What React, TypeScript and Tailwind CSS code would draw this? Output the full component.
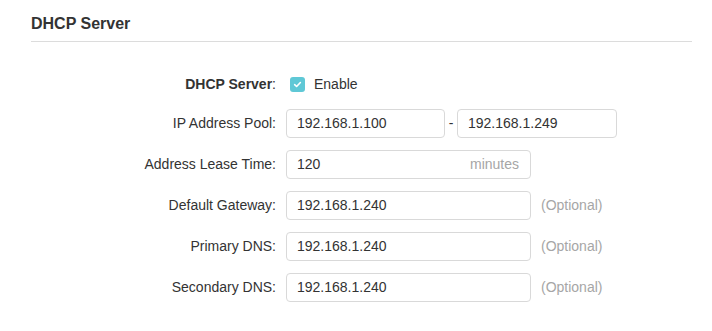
const font = { fontFamily: '"Liberation Sans", Arial, sans-serif' };

interface FieldRow {
  label: string;
  value: string;
  suffix?: string;
}

const SINGLE_ROWS: FieldRow[] = [
  { label: 'Default Gateway:', value: '192.168.1.240', suffix: '(Optional)' },
  { label: 'Primary DNS:', value: '192.168.1.240', suffix: '(Optional)' },
  { label: 'Secondary DNS:', value: '192.168.1.240', suffix: '(Optional)' },
];

function Label({ children, bold }: { children: React.ReactNode; bold?: boolean }) {
  return (
    <div className={`w-[245px] shrink-0 text-right text-[14px] text-[#333] ${bold ? 'font-bold' : ''}`}>
      {children}
    </div>
  );
}

function TextBox({ value, width, unit }: { value: string; width: string; unit?: string }) {
  return (
    <div
      className={`${width} h-[29px] flex items-center justify-between rounded-[4px] border border-[#d9d9d9] bg-white pl-[10px] pr-[11px] text-[14px] text-[#333]`}
    >
      <span>{value}</span>
      {unit && <span className="text-[#a6a6a6]">{unit}</span>}
    </div>
  );
}

export default function App() {
  return (
    <div className="w-[712px] h-[331px] bg-white pl-[31px] pr-[20px]" style={font}>
      <div className="pt-[14px] pb-[7px] border-b border-[#dcdcdc]">
        <h2 className="text-[16px] leading-[20px] font-bold text-[#333]">DHCP Server</h2>
      </div>

      <div className="pt-[28px] flex flex-col">
        <div className="flex items-center h-[28px] mb-[11px]">
          <Label bold>
            DHCP Server<span className="font-normal">:</span>
          </Label>
          <div className="ml-[14px] w-[15px] h-[15px] rounded-[3px] bg-[#5fc8d6] flex items-center justify-center">
            <svg width="9" height="9" viewBox="0 0 10 10">
              <path d="M1.8 5.2 L4 7.2 L8.2 2.8" fill="none" stroke="white" strokeWidth="1.8" strokeLinecap="round" strokeLinejoin="round" />
            </svg>
          </div>
          <span className="ml-[9px] text-[14px] text-[#333]">Enable</span>
        </div>

        <div className="flex items-center h-[28px] mb-[13px]">
          <Label>IP Address Pool:</Label>
          <div className="ml-[10px] flex items-center">
            <TextBox value="192.168.1.100" width="w-[159px]" />
            <span className="w-[12px] text-center text-[14px] text-[#333]">-</span>
            <TextBox value="192.168.1.249" width="w-[160px]" />
          </div>
        </div>

        <div className="flex items-center h-[28px] mb-[13px]">
          <Label>Address Lease Time:</Label>
          <div className="ml-[10px]">
            <TextBox value="120" width="w-[245px]" unit="minutes" />
          </div>
        </div>

        {SINGLE_ROWS.map((row) => (
          <div key={row.label} className="flex items-center h-[28px] mb-[13px]">
            <Label>{row.label}</Label>
            <div className="ml-[10px] flex items-center">
              <TextBox value={row.value} width="w-[245px]" />
              <span className="ml-[10px] text-[14px] text-[#a6a6a6]">{row.suffix}</span>
            </div>
          </div>
        ))}
      </div>
    </div>
  );
}
